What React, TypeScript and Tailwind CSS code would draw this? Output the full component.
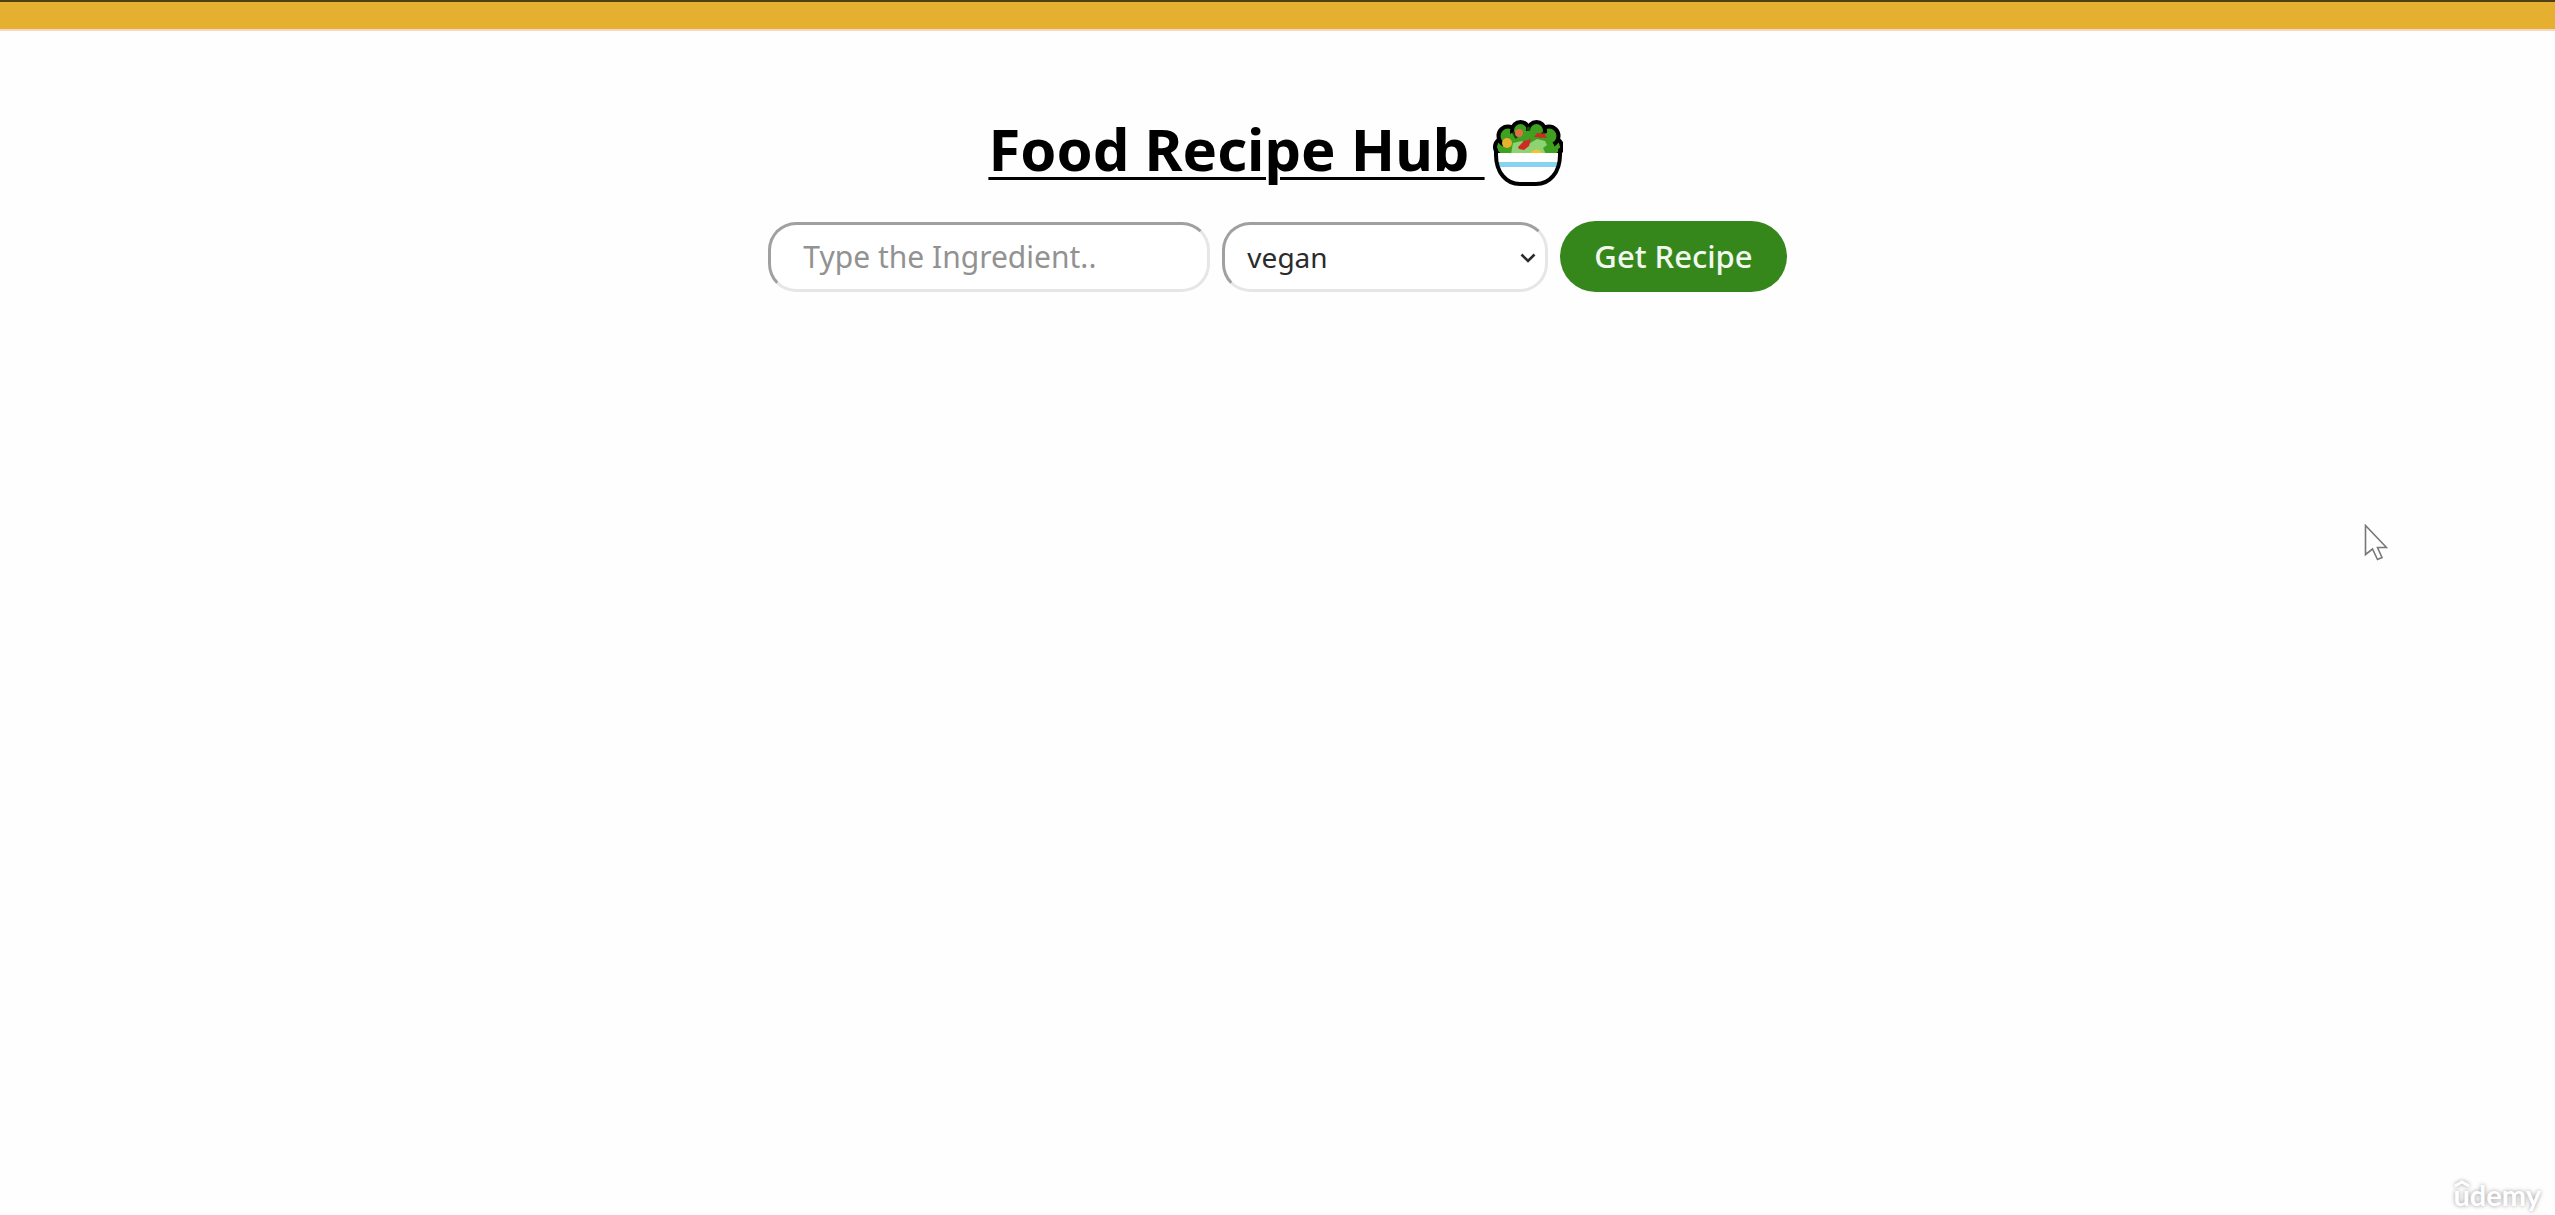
function SaladIcon() {
  return (
    <svg viewBox="0 0 70 68" className="h-[68px] w-[70px] shrink-0" role="img" aria-label="Salad bowl">
      <g fill="#3fa022" stroke="#000" strokeWidth="4">
        <circle cx="11" cy="28" r="9" />
        <circle cx="60" cy="28" r="9" />
        <circle cx="15" cy="17" r="9.5" />
        <circle cx="56" cy="17" r="9.5" />
        <rect x="19" y="3" width="17" height="32" rx="8.5" />
        <rect x="35" y="3" width="17" height="32" rx="8.5" />
      </g>
      <path d="M10 35 V26 L18 14 L28 16 H43 L54 14 L61 26 V35 Z" fill="#3fa022" />
      <path d="M35.500 9 V17 M21 14 L23 18 M50 14 L48 17" stroke="#14440a" strokeWidth="3" strokeLinecap="round" />
      <path d="M18 35 L20 24 L29 22 L34 26 L44 20 L52 22 L54 26 L50 29 L53 35 Z" fill="#8fd274" />
      <path d="M30 12 H41 V17 L35 21 L30 19 Z" fill="#3fa022" />
      <path d="M25 28 L31 22 L38 20 L36 27 L31 31 L26 30 Z" fill="#cf2a25" />
      <path d="M41 18 L44 14 L52 15 L54 19 Z" fill="#cf2a25" />
      <circle cx="26" cy="14" r="4" fill="#dd7047" />
      <circle cx="14" cy="24" r="5" fill="#e8b02c" />
      <path d="M37 34 Q43 27 50 34 Z" fill="#f5c32b" />
      <path d="M3 34 H67 C67 53 57 65 43 65 H27 C13 65 3 53 3 34 Z" fill="#fff" />
      <path d="M4 43 H66 V48 H4 Z" fill="#86d3f3" />
      <path
        d="M3 31 V36 C3 53 13 65 27 65 H43 C57 65 67 53 67 36 V31"
        fill="none"
        stroke="#000"
        strokeWidth="4"
        strokeLinecap="round"
      />
    </svg>
  );
}

function SearchForm() {
  return (
    <form className="flex items-center justify-center gap-3" onSubmit={(e) => e.preventDefault()}>
      <input
        type="text"
        aria-label="Ingredient"
        placeholder="Type the Ingredient.."
        className="h-[70px] w-[442px] rounded-[28px] border-[3px] border-t-[#a0a0a0] border-r-[#e6e6e6] border-b-[#e6e6e6] border-l-[#a0a0a0] bg-white px-8 text-[30px] text-[#222] outline-none placeholder:text-[#929292]"
      />
      <div className="relative">
        <select
          aria-label="Diet"
          defaultValue="vegan"
          className="block h-[70px] w-[326px] appearance-none rounded-[28px] border-[3px] border-t-[#a0a0a0] border-r-[#e6e6e6] border-b-[#e6e6e6] border-l-[#a0a0a0] bg-white px-[22px] text-[28px] text-[#2b2b2b] outline-none"
        >
          <option value="vegan">vegan</option>
        </select>
        <svg viewBox="0 0 16 10" className="pointer-events-none absolute top-[31px] right-3 h-[10px] w-4">
          <path d="M1.500 1.500 L8 8 L14.500 1.500" fill="none" stroke="#2b2b2b" strokeWidth="2.600" />
        </svg>
      </div>
      <button type="submit" className="h-[71px] rounded-full bg-[#35871b] px-[34px] text-[31px] font-medium text-[#f2f8ef]">
        Get Recipe
      </button>
    </form>
  );
}

function Watermark() {
  return (
    <div className="absolute right-3.5 bottom-0.5 font-['Lato',sans-serif] text-[29px] leading-9 font-bold text-white [text-shadow:0_0_4px_rgba(0,0,0,0.4)]">
      <svg viewBox="0 0 16 8" className="absolute top-0.5 left-0 h-2 w-4 overflow-visible drop-shadow-[0_0_2px_rgba(0,0,0,0.4)]">
        <path d="M1 7 L8 3 L15 7" fill="none" stroke="#fff" strokeWidth="3" />
      </svg>
      udemy
    </div>
  );
}

export default function App() {
  return (
    <div className="relative min-h-screen overflow-hidden bg-[#fefefe] font-['Noto_Sans',sans-serif]">
      <header className="h-[31px] border-t-2 border-b-2 border-t-[#4e3f14] border-b-[#f8d5c4] bg-[#e5b02f]" />
      <main className="flex flex-col items-center gap-[30px] pt-[76px]">
        <h1 className="flex items-end gap-2 pr-1 text-[58px] leading-[84px] font-bold text-black">
          <span className="whitespace-pre underline decoration-[3px] underline-offset-[6px]">Food Recipe Hub </span>
          <span className="pb-1">
            <SaladIcon />
          </span>
        </h1>
        <SearchForm />
      </main>
      <svg viewBox="0 0 24 38" className="absolute top-[524px] right-[167px] h-[38px] w-6">
        <path
          d="M1.500 1.500 V30.500 L8.500 25 L13.500 35.500 L18 33.500 L13.500 23.500 H22.500 Z"
          fill="#fff"
          stroke="#777"
          strokeWidth="1.600"
        />
      </svg>
      <Watermark />
    </div>
  );
}
